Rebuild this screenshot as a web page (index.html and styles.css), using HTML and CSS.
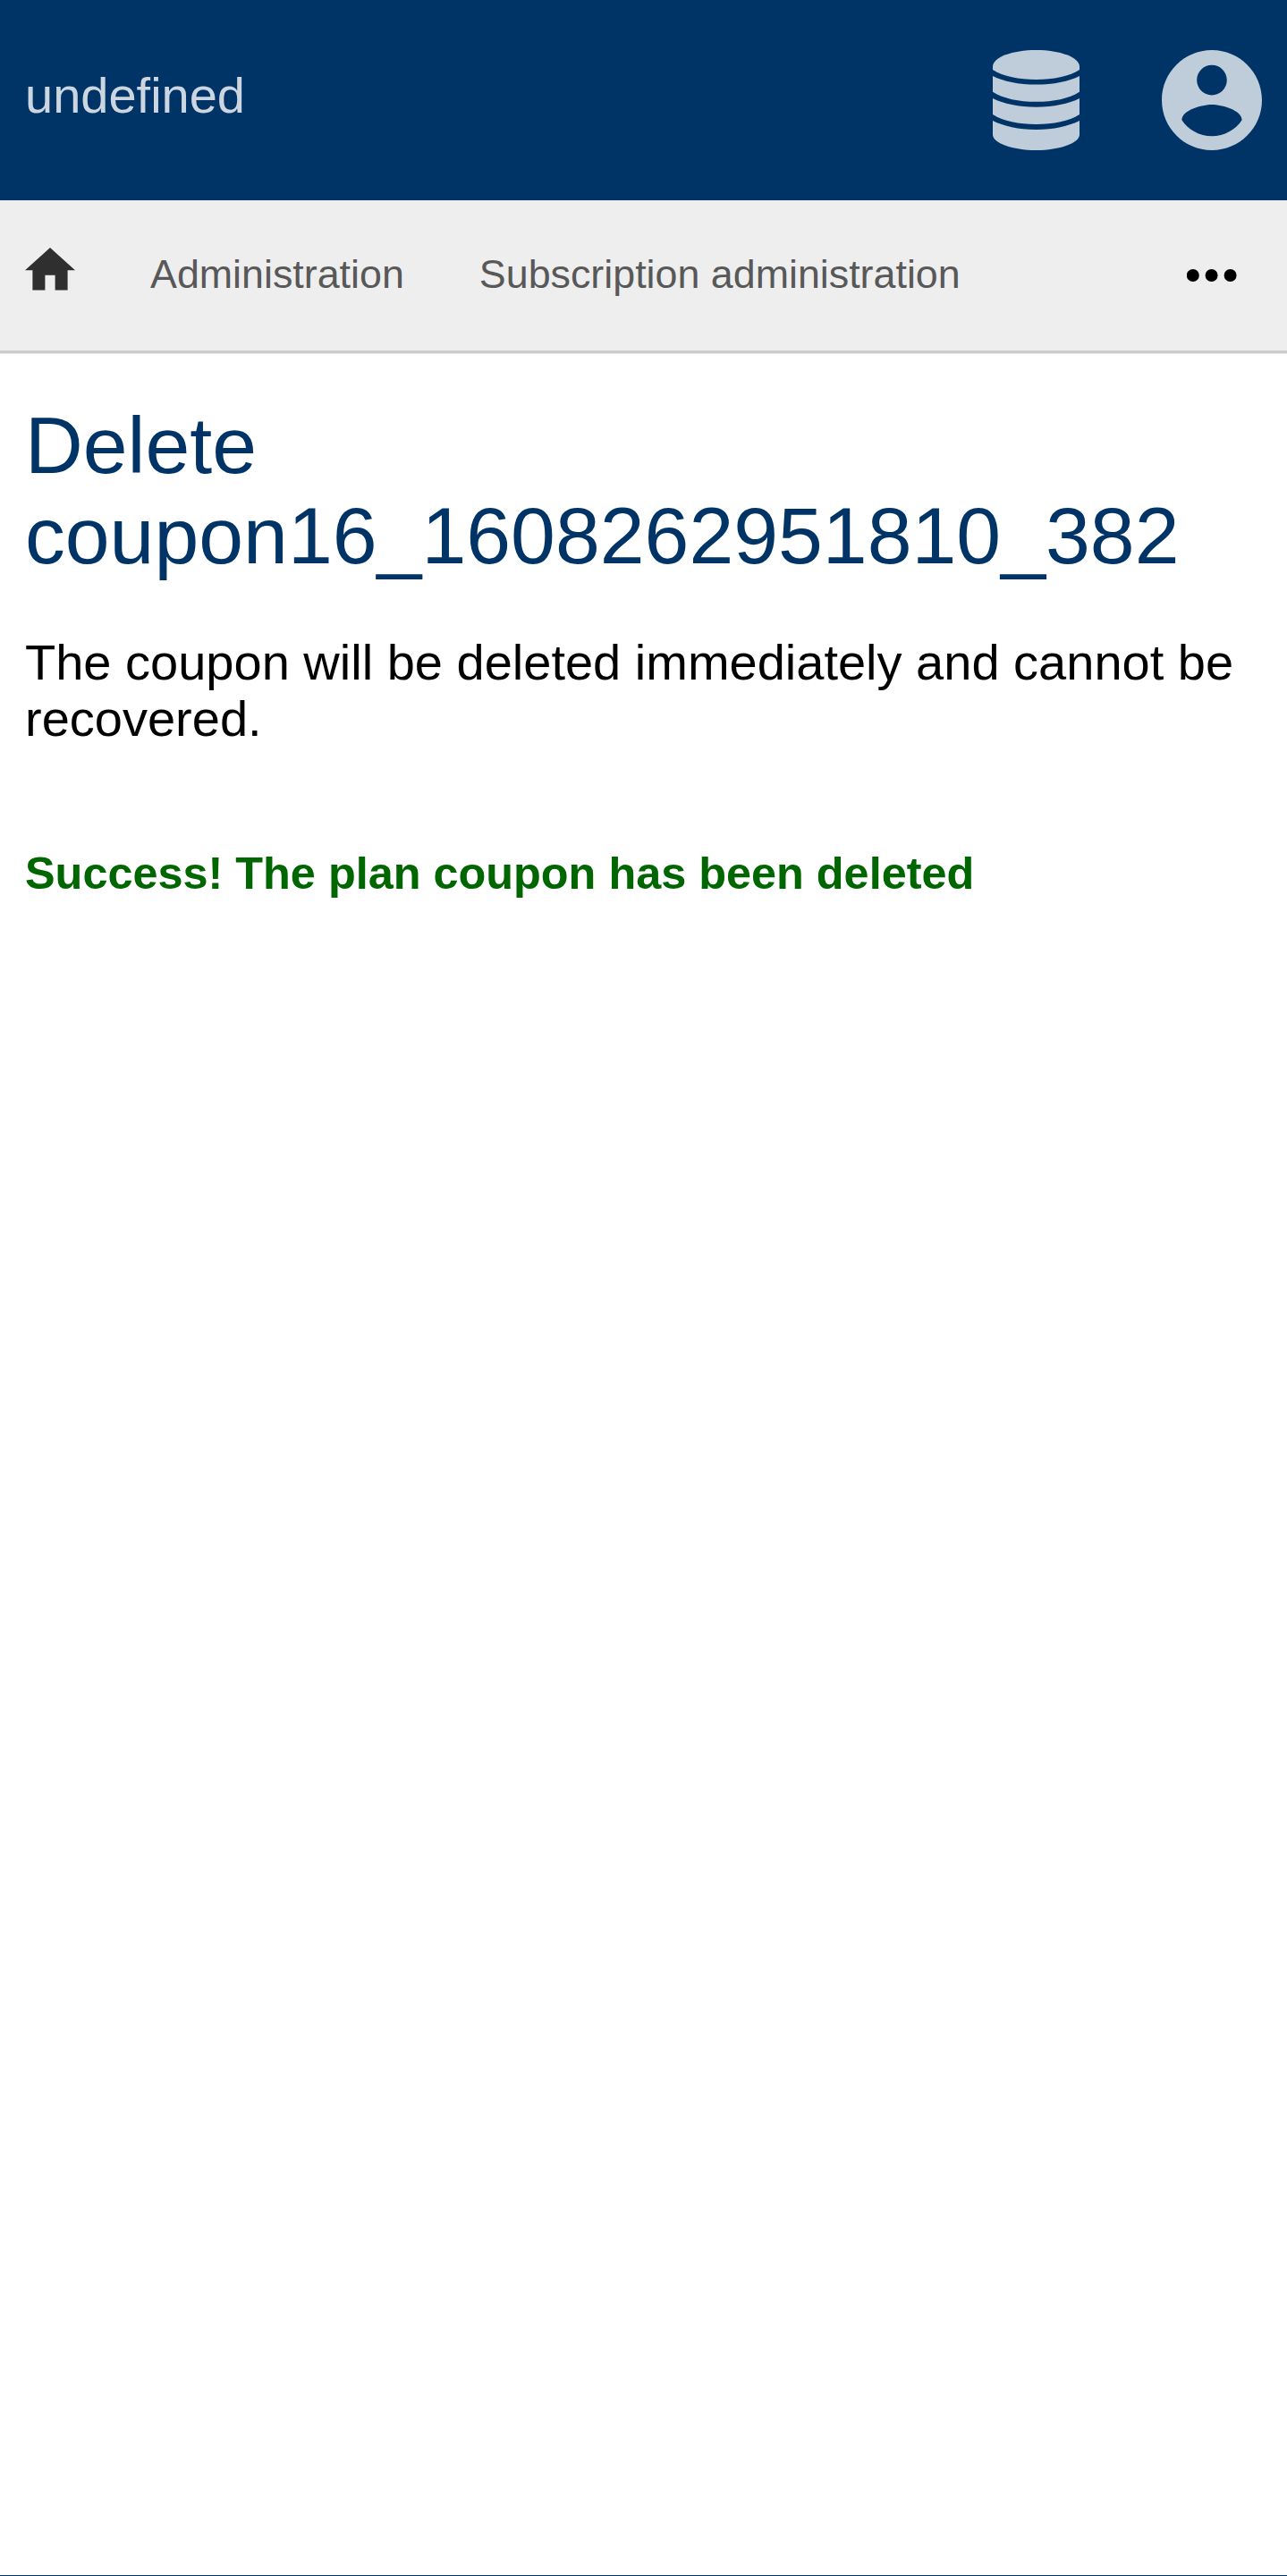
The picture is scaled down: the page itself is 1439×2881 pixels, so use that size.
FILE: index.html
```html
<!DOCTYPE html>
<html lang="en">
<head>
<meta charset="utf-8">
<title>Delete coupon</title>
<link rel="stylesheet" href="styles.css">
</head>
<body>
<header class="header">
  <span class="brand">undefined</span>
  <div class="actions">
    <svg class="database" viewBox="0 0 97 112" aria-hidden="true">
      <path d="M0 18.5C0 8 22 0 48.5 0S97 8 97 18.5V22C85 29.5 68 33 48.5 33S12 29.5 0 22Z"/>
      <path d="M0 29C12 35 29 38.6 48.5 38.6S85 35 97 29V46.7C85 54.3 68 57.8 48.5 57.8S12 54.3 0 46.7Z"/>
      <path d="M0 54C12 60 29 63.7 48.5 63.7S85 60 97 54V72C85 79.5 68 83 48.5 83S12 79.5 0 72Z"/>
      <path d="M0 79C12 85 29 89 48.5 89S85 85 97 79V94.5C97 104 75 112 48.5 112S0 104 0 94.5Z"/>
    </svg>
    <svg class="account" viewBox="2 2 20 20" aria-hidden="true">
      <path d="M12 2C6.48 2 2 6.48 2 12s4.48 10 10 10 10-4.48 10-10S17.52 2 12 2zm0 3c1.66 0 3 1.34 3 3s-1.34 3-3 3-3-1.34-3-3 1.34-3 3-3zm0 14.2c-2.5 0-4.71-1.28-6-3.22.03-1.99 4-3.08 6-3.08 1.99 0 5.97 1.09 6 3.08-1.29 1.94-3.5 3.22-6 3.22z"/>
    </svg>
  </div>
</header>
<nav class="nav">
  <svg class="home" viewBox="2 3 20 17" aria-hidden="true"><path d="M10 20v-6h4v6h5v-8h3L12 3 2 12h3v8z"/></svg>
  <span class="link">Administration</span>
  <span class="link">Subscription administration</span>
  <svg class="more" viewBox="0 0 56 14" aria-hidden="true"><circle cx="6.8" cy="7" r="7"/><circle cx="27.6" cy="7" r="7"/><circle cx="48.6" cy="7" r="7"/></svg>
</nav>
<main class="content">
  <h1 class="title">Delete coupon16_1608262951810_382</h1>
  <p class="text">The coupon will be deleted immediately and cannot be recovered.</p>
  <p class="success">Success! The plan coupon has been deleted</p>
</main>
<footer class="footer"></footer>
</body>
</html>
```
FILE: styles.css
```css
* {
  box-sizing: border-box;
}

body {
  margin: 0;
  height: 2881px;
  display: flex;
  flex-direction: column;
  overflow: hidden;
  background: #fff;
  color: #000;
  font-family: "Liberation Sans", Arial, sans-serif;
  font-size: 56px;
}

.header {
  height: 224px;
  flex: none;
  display: flex;
  align-items: flex-start;
  justify-content: space-between;
  padding: 0 28.5px 0 28px;
  background: #003366;
}

.brand {
  line-height: 213px;
  color: #ccd6e0;
}

.actions {
  display: flex;
  gap: 91.5px;
  padding-top: 56px;
  fill: #bfccd9;
}

.database {
  width: 97px;
  height: 112px;
}

.account {
  width: 112px;
  height: 112px;
}

.nav {
  height: 171px;
  flex: none;
  display: flex;
  align-items: flex-start;
  gap: 84px;
  padding: 0 56px 0 28px;
  background: #eee;
  border-bottom: 3px solid #ccc;
  box-shadow: 0 1px 0 #e6e6e6;
}

.home {
  width: 56px;
  height: 47.6px;
  margin-top: 53.4px;
  fill: #2f2f2f;
}

.link {
  font-size: 44.8px;
  line-height: 165px;
  color: #585858;
  white-space: nowrap;
}

.more {
  width: 56px;
  height: 14px;
  margin: 77px 0 0 auto;
}

.content {
  flex: 1;
  padding: 53px 28px 0;
}

.title {
  margin: 0 0 59px;
  font-size: 89.6px;
  font-weight: 400;
  line-height: 101px;
  color: #003366;
}

.text {
  margin: 0 0 114px;
  line-height: 63px;
}

.success {
  margin: 0;
  font-size: 50.4px;
  font-weight: 700;
  line-height: 56px;
  color: #006600;
}

.footer {
  height: 1px;
  flex: none;
  background: #003366;
}
```
